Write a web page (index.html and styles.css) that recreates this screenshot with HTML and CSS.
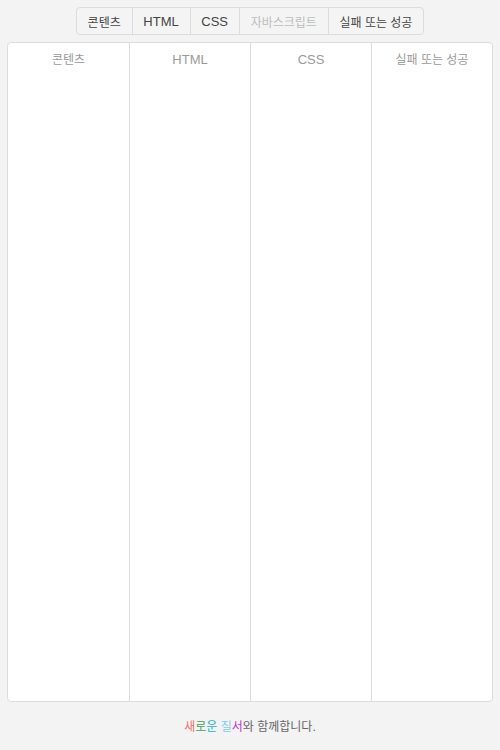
FILE: index.html
```html
<!DOCTYPE html>
<html lang="ko">
<head>
<meta charset="utf-8">
<title>새로운 질서</title>
<link rel="stylesheet" href="styles.css">
</head>
<body>
<div class="page">
  <nav class="tabs">
    <span class="tab">콘텐츠</span>
    <span class="tab latin">HTML</span>
    <span class="tab latin">CSS</span>
    <span class="tab disabled">자바스크립트</span>
    <span class="tab">실패 또는 성공</span>
  </nav>
  <main class="panel">
    <section class="col"><h2 class="col-title">콘텐츠</h2></section>
    <section class="col"><h2 class="col-title latin">HTML</h2></section>
    <section class="col"><h2 class="col-title latin">CSS</h2></section>
    <section class="col"><h2 class="col-title">실패 또는 성공</h2></section>
  </main>
  <footer class="footer">
    <p class="footer-text"><span class="c1">새</span><span class="c2">로</span><span class="c3">운</span> <span class="c4">질</span><span class="c5">서</span>와 함께합니다.</p>
  </footer>
</div>
</body>
</html>
```

FILE: styles.css
```css
html, body {
  margin: 0;
  padding: 0;
  background: #f3f3f3;
}
body {
  font-family: "Liberation Sans", "Noto Sans CJK KR", sans-serif;
  font-size: 12px;
  color: #555;
}
.page {
  box-sizing: border-box;
  height: 750px;
  padding: 7px 7px 0 7px;
  display: flex;
  flex-direction: column;
  align-items: center;
}
.tabs {
  display: flex;
  height: 28px;
  box-sizing: border-box;
  border: 1px solid #dcdcdc;
  border-radius: 4px;
  background: #f4f4f4;
}
.tab {
  display: flex;
  align-items: center;
  justify-content: center;
  padding: 0 10.8px;
  color: #444;
  font-size: 12px;
  border-left: 1px solid #dcdcdc;
}
.tab.latin { font-size: 13px; }
.tab:first-child { border-left: 0; }
.tab.disabled { color: #bdbdbd; }
.panel {
  margin-top: 7px;
  align-self: stretch;
  height: 660px;
  box-sizing: border-box;
  background: #fff;
  border: 1px solid #dcdcdc;
  border-radius: 4px;
  display: grid;
  grid-template-columns: repeat(4, 1fr);
}
.col {
  border-left: 1px solid #dcdcdc;
}
.col:first-child { border-left: 0; }
.col-title {
  margin: 0;
  padding-top: 8px;
  text-align: center;
  font-size: 12px;
  font-weight: normal;
  color: #9a9a9a;
  line-height: 18px;
}
.col-title.latin { font-size: 13px; }
.footer {
  flex: 1;
  display: flex;
  align-items: center;
  justify-content: center;
}
.footer-text {
  margin: 0;
  margin-top: -1px;
  color: #666;
  font-size: 12px;
}
.c1 { color: #f56c6c; }
.c2 { color: #3aa757; }
.c3 { color: #1fb3c7; }
.c4 { color: #7fd0ee; }
.c5 { color: #c234d4; }
```
